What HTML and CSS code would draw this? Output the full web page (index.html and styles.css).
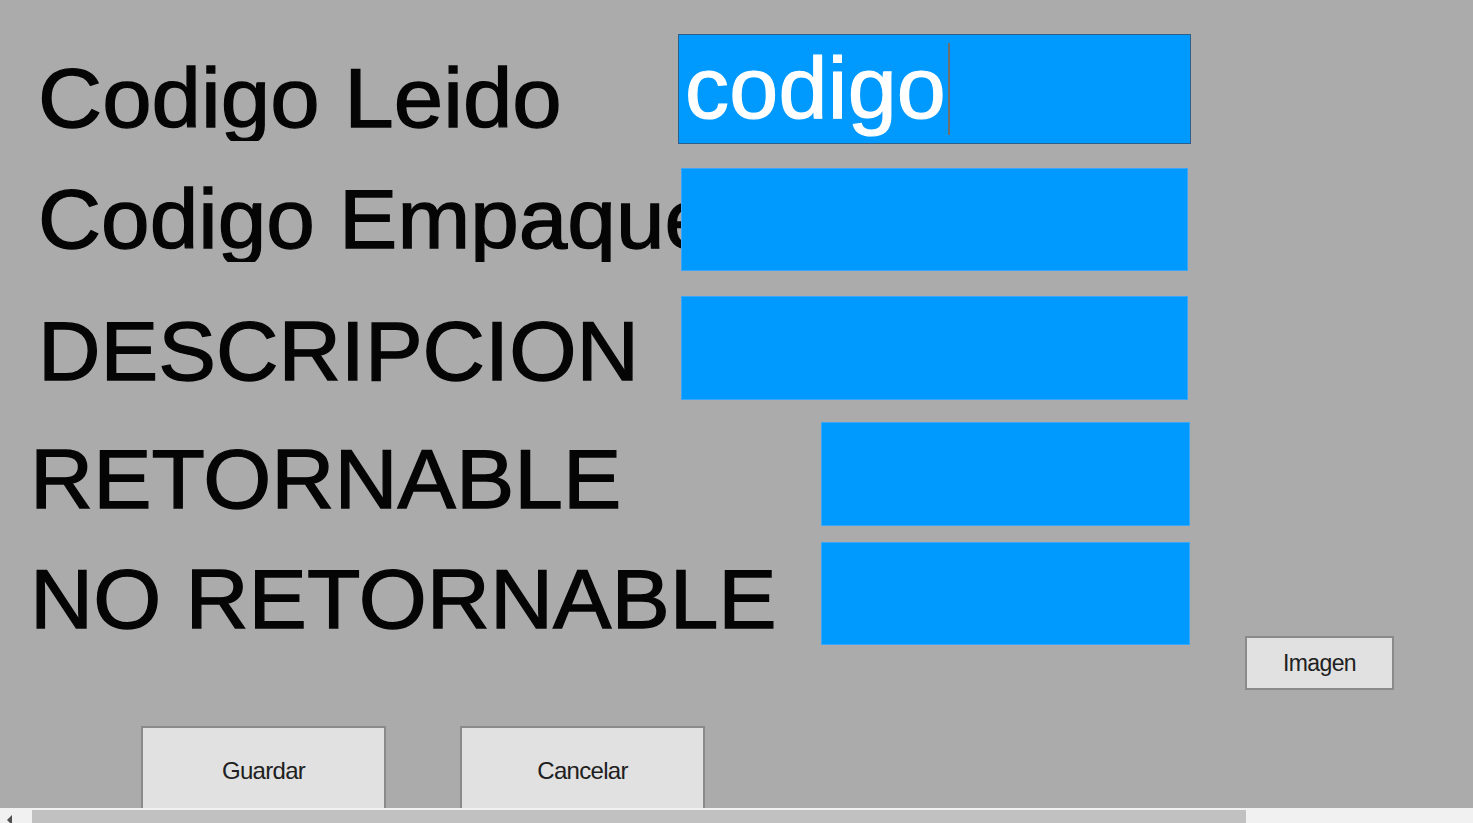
FILE: index.html
```html
<!DOCTYPE html>
<html>
<head>
<meta charset="utf-8">
<link rel="stylesheet" href="styles.css">
</head>
<body>
<div class="form">
  <div class="row row1">
    <div class="label lbl1"><span class="txt txt-leido">Codigo Leido</span></div>
    <div class="textbox tb-wide focused"><span class="value">codigo</span><span class="caret"></span></div>
  </div>
  <div class="row row2">
    <div class="label lbl2"><span class="txt txt-empaque">Codigo Empaque</span></div>
    <div class="textbox tb-mid"></div>
  </div>
  <div class="row row3">
    <div class="label lbl3"><span class="txt txt-desc">DESCRIPCION</span></div>
    <div class="textbox tb-mid"></div>
  </div>
  <div class="row row4">
    <div class="label lbl4"><span class="txt txt-upper">RETORNABLE</span></div>
    <div class="textbox tb-short"></div>
  </div>
  <div class="row row5">
    <div class="label lbl4"><span class="txt txt-upper">NO RETORNABLE</span></div>
    <div class="textbox tb-short"></div>
    <button class="btn btn-img">Imagen</button>
  </div>
  <div class="actions">
    <button class="btn btn-big">Guardar</button>
    <button class="btn btn-big btn-cancel">Cancelar</button>
  </div>
</div>
<div class="hscroll">
  <div class="arrow-left"></div>
  <div class="thumb"></div>
</div>
</body>
</html>
```

FILE: styles.css
```css
html, body {
  margin: 0;
  padding: 0;
}
body {
  width: 1473px;
  height: 823px;
  overflow: hidden;
  background: #ababab;
  font-family: "Liberation Sans", Arial, sans-serif;
}
.form {
  height: 808px;
  overflow: hidden;
  padding-top: 34px;
  box-sizing: border-box;
}
.row {
  display: flex;
  align-items: flex-start;
}
.row1 { height: 110px; margin-bottom: 24px; }
.row2 { height: 103px; margin-bottom: 25px; }
.row3 { height: 104px; margin-bottom: 22px; }
.row4 { height: 104px; margin-bottom: 16px; }
.row5 { height: 148px; }

.label {
  font-size: 84px;
  line-height: 86px;
  height: 86px;
  color: #050505;
  white-space: nowrap;
  overflow: hidden;
  flex: none;
}
.txt {
  display: inline-block;
  transform-origin: left center;
  -webkit-text-stroke: 1.3px #050505;
}
.txt-leido { transform: scaleX(1.058); }
.txt-empaque { transform: scaleX(1.04); }
.txt-desc { transform: scaleX(1.03); }
.txt-upper { transform: scaleX(1.041); }

.lbl1 { margin-left: 38px; width: 640px; margin-top: 21px; }
.lbl2 { margin-left: 38px; width: 643px; margin-top: 8px; }
.lbl3 { margin-left: 38px; width: 643px; margin-top: 12px; }
.lbl4 { margin-left: 30px; width: 791px; margin-top: 14px; }

.textbox {
  background: #0099fe;
  box-sizing: border-box;
  flex: none;
  border: 1px solid #3aa6f7;
}
.tb-wide { width: 513px; height: 110px; }
.tb-mid { width: 507px; height: 103px; }
.row3 .tb-mid { height: 104px; }
.tb-short { width: 369px; height: 104px; }
.row5 .tb-short { height: 103px; }

.focused {
  border: 1px solid #2f5f86;
  padding: 9px 0 0 6px;
  display: flex;
  align-items: flex-start;
}
.value {
  font-size: 88px;
  line-height: 88px;
  color: #ffffff;
  -webkit-text-stroke: 1.2px #ffffff;
  letter-spacing: 0.3px;
}
.caret {
  width: 2px;
  height: 92px;
  margin-top: -1px;
  background: #6e6e6e;
  margin-left: 2px;
}

.btn {
  font-family: "Liberation Sans", Arial, sans-serif;
  background: #e1e1e1;
  border: 1px solid #8a8a8a;
  color: #202020;
  padding: 0;
  box-sizing: border-box;
  flex: none;
}
.btn-img {
  margin-left: 55px;
  margin-top: 94px;
  width: 149px;
  height: 54px;
  font-size: 23px;
  letter-spacing: -0.6px;
  border-width: 2px;
}
.actions {
  display: flex;
  margin-top: 36px;
  padding-left: 141px;
}
.btn-big {
  width: 245px;
  height: 90px;
  font-size: 24px;
  letter-spacing: -0.7px;
  border-width: 2px;
}
.btn-cancel {
  margin-left: 74px;
}

.hscroll {
  height: 15px;
  background: #f1f1f1;
  display: flex;
  align-items: flex-end;
}
.arrow-left {
  width: 0;
  height: 0;
  margin-left: 7px;
  margin-bottom: -2px;
  border-top: 5px solid transparent;
  border-bottom: 5px solid transparent;
  border-right: 5px solid #505050;
  flex: none;
}
.thumb {
  margin-left: 20px;
  width: 1214px;
  height: 13px;
  background: #c1c1c1;
  flex: none;
}
```
